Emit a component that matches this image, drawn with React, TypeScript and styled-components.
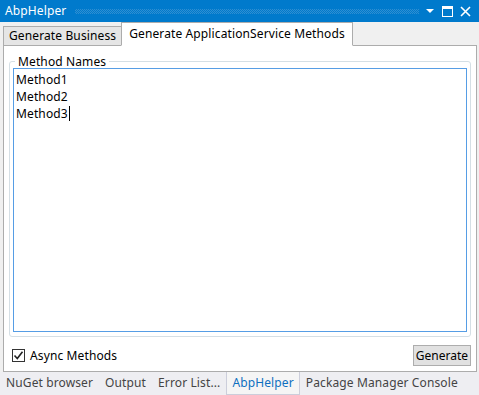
import styled, { createGlobalStyle } from "styled-components";

const GlobalStyle = createGlobalStyle`
    html, body {
        margin: 0;
        padding: 0;
        background: #f0f0f0;
    }
    body {
        font-family: "Noto Sans", "Liberation Sans", sans-serif;
        font-size: 12px;
        letter-spacing: 0.12px;
    }
`;

const methods = ["Method1", "Method2", "Method3"];

const bottomTabs = [
    { label: "NuGet browser" },
    { label: "Output" },
    { label: "Error List..." },
    { label: "AbpHelper", active: true },
    { label: "Package Manager Console" },
];

export default function App() {
    return (
        <>
            <GlobalStyle />
            <Window>
                <TitleBar>
                    <Title>AbpHelper</Title>
                    <Grip />
                    <TitleButtons>
                        <svg width="10" height="10" viewBox="0 0 10 10">
                            <path d="M1 3 H9 L5 7 Z" fill="#fff" />
                        </svg>
                        <svg width="11" height="11" viewBox="0 0 11 11">
                            <rect x="0.5" y="0.5" width="10" height="10" fill="none" stroke="#fff" />
                            <rect x="0" y="0" width="11" height="3" fill="#fff" />
                        </svg>
                        <svg width="11" height="11" viewBox="0 0 11 11">
                            <path d="M1 1 L10 10 M10 1 L1 10" stroke="#fff" strokeWidth="1.6" />
                        </svg>
                    </TitleButtons>
                </TitleBar>

                <Body>
                    <TabStrip>
                        <Tab>Generate Business</Tab>
                        <Tab $active>Generate ApplicationService Methods</Tab>
                    </TabStrip>
                    <Panel>
                        <GroupBox>
                            <Legend>Method Names</Legend>
                            <TextArea>
                                {methods.map((m, i) => (
                                    <Line key={m}>
                                        {m}
                                        {i === methods.length - 1 && <Caret />}
                                    </Line>
                                ))}
                            </TextArea>
                        </GroupBox>
                        <Footer>
                            <CheckLabel>
                                <CheckBox>
                                    <svg width="11" height="11" viewBox="0 0 11 11">
                                        <path
                                            d="M1.5 5.5 L4.3 8.5 L9.5 1.8"
                                            fill="none"
                                            stroke="#222"
                                            strokeWidth="1.6"
                                        />
                                    </svg>
                                </CheckBox>
                                Async Methods
                            </CheckLabel>
                            <Button>Generate</Button>
                        </Footer>
                    </Panel>
                </Body>

                <BottomBar>
                    {bottomTabs.map((t) => (
                        <BottomTab key={t.label} $active={t.active}>
                            {t.label}
                        </BottomTab>
                    ))}
                </BottomBar>
            </Window>
        </>
    );
}

const Window = styled.div`
    width: 479px;
    height: 395px;
    display: flex;
    flex-direction: column;
    background: #f0f0f0;
    overflow: hidden;
`;

const TitleBar = styled.div`
    height: 22px;
    flex-shrink: 0;
    background: #007acc;
    display: flex;
    align-items: center;
    padding: 0 0 0 5px;
    color: #fff;
`;

const Title = styled.div`
    line-height: 22px;
`;

const Grip = styled.div`
    flex: 1;
    height: 5px;
    margin: 1px 6px 0 9px;
    background: repeating-conic-gradient(#2f8fd2 0 25%, transparent 0 50%) 0 0 / 2px 2px;
`;

const TitleButtons = styled.div`
    display: flex;
    align-items: center;
    gap: 7px;
    padding-right: 8px;
    & > svg {
        display: block;
    }
`;

const Body = styled.div`
    flex: 1;
    display: flex;
    flex-direction: column;
    padding: 0 2px 0 3px;
`;

const TabStrip = styled.div`
    display: flex;
    align-items: flex-end;
    height: 24px;
    margin-bottom: -1px;
    position: relative;
    z-index: 1;
`;

const Tab = styled.div<{ $active?: boolean }>`
    box-sizing: border-box;
    height: ${({ $active }) => ($active ? "24px" : "20px")};
    padding: ${({ $active }) => ($active ? "2px 7px 0 7px" : "0 5px")};
    margin-left: ${({ $active }) => ($active ? "-1px" : "0")};
    border: 1px solid #acacac;
    border-bottom: ${({ $active }) => ($active ? "1px solid #fff" : "1px solid #acacac")};
    background: ${({ $active }) => ($active ? "#fff" : "#e5e5e5")};
    color: #000;
    line-height: 18px;
    white-space: nowrap;
`;

const Panel = styled.div`
    flex: 1;
    box-sizing: border-box;
    background: #fff;
    border: 1px solid #acacac;
    display: flex;
    flex-direction: column;
    padding: 9px 5px 0 5px;
`;

const GroupBox = styled.fieldset`
    flex: 1;
    margin: 0;
    border: 1px solid #d5dfe5;
    border-radius: 3px;
    padding: 0 3px 4px 3px;
    display: flex;
    min-height: 0;
`;

const Legend = styled.legend`
    padding: 0 3px;
    margin-left: 2px;
    line-height: 13px;
    color: #000;
`;

const TextArea = styled.div`
    flex: 1;
    border: 1px solid #569de5;
    padding: 2px 2px;
    color: #000;
`;

const Line = styled.div`
    line-height: 17px;
    display: flex;
    align-items: center;
`;

const Caret = styled.span`
    display: inline-block;
    width: 1px;
    height: 15px;
    background: #000;
    margin-left: 1px;
`;

const Footer = styled.div`
    height: 34px;
    display: flex;
    align-items: center;
    justify-content: space-between;
    padding: 3px 0 0 3px;
    box-sizing: border-box;
`;

const CheckLabel = styled.label`
    display: flex;
    align-items: center;
    gap: 5px;
    color: #000;
`;

const CheckBox = styled.span`
    box-sizing: border-box;
    width: 13px;
    height: 13px;
    border: 1px solid #333;
    background: #fff;
    display: flex;
    align-items: center;
    justify-content: center;
`;

const Button = styled.button`
    box-sizing: border-box;
    height: 21px;
    padding: 0 2px;
    margin-right: 0;
    font: inherit;
    color: #000;
    background: #e1e1e1;
    border: 1px solid #adadad;
    border-radius: 0;
`;

const BottomBar = styled.div`
    height: 23px;
    flex-shrink: 0;
    display: flex;
    align-items: stretch;
    padding-left: 0;
    background: #eeeef2;
`;

const BottomTab = styled.div<{ $active?: boolean }>`
    padding: 0 5px;
    line-height: 22px;
    white-space: nowrap;
    color: ${({ $active }) => ($active ? "#0e70c0" : "#444")};
    background: ${({ $active }) => ($active ? "#f5f5f5" : "transparent")};
    border: 1px solid ${({ $active }) => ($active ? "#cccedb" : "transparent")};
    border-top: none;
`;
